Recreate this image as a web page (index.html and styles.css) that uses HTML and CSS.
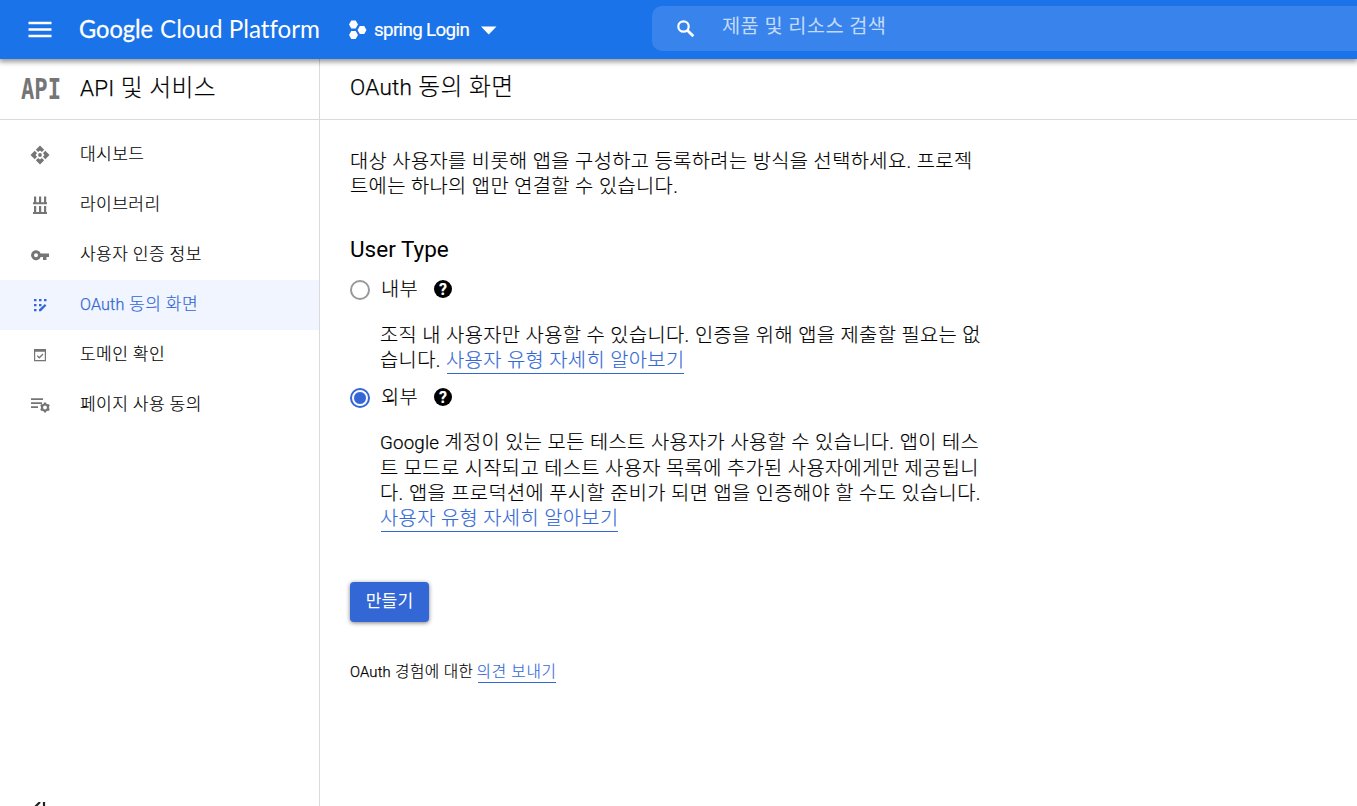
FILE: index.html
```
<!DOCTYPE html>
<html lang="ko">
<head>
<meta charset="utf-8">
<title>OAuth 동의 화면</title>
<link rel="stylesheet" href="styles.css">
</head>
<body>
<header class="topbar">
  <svg class="menu" width="24" height="18" viewBox="0 0 24 18"><path d="M0.500 2h23M0.500 8.500h23M0.500 15h23" stroke="#fff" stroke-width="2.400"/></svg>
  <svg class="brand" width="244" height="36" viewBox="0 0 244 36"><text x="0" y="26" textLength="74" lengthAdjust="spacingAndGlyphs" class="brand-strong">Google</text><text x="81" y="26" textLength="160" lengthAdjust="spacingAndGlyphs">Cloud Platform</text></svg>
  <button class="project">
    <svg width="18" height="20" viewBox="0 0 18 20" fill="#fff"><path d="M2.300.5h4.400L9 4.500 6.700 8.500H2.300L0 4.500zM2.300 11h4.400L9 15l-2.300 4H2.300L0 15zM10.800 6h4.400l2.300 4-2.300 4h-4.400L8.500 10z"/></svg>
    <span>spring Login</span>
    <svg class="caret" width="16" height="9" viewBox="0 0 16 9"><path d="M0 .5h15.500L7.750 8.500z" fill="#fff"/></svg>
  </button>
  <div class="search">
    <svg width="18" height="18" viewBox="0 0 18 18" fill="none" stroke="#fff" stroke-width="2.200"><circle cx="6.500" cy="6.500" r="5.200"/><path d="M10.300 10.300l6 6" stroke-width="2.800"/></svg>
    <span>제품 및 리소스 검색</span>
  </div>
</header>
<div class="shell">
  <aside class="side">
    <div class="side-head">
      <svg width="54" height="44" viewBox="0 0 54 44"><text x="1" y="32" textLength="40" lengthAdjust="spacingAndGlyphs" class="api">API</text></svg>
      <span><span class="en">API</span> 및 서비스</span>
    </div>
    <nav>
      <a class="item"><svg viewBox="0 0 20 20"><circle cx="10" cy="10" r="1.900"/><path d="M10 .5l4.200 4.200-2.400 2.400L10 5.500 8.200 7.100 5.800 4.700zM10 19.500l4.200-4.200-2.400-2.400-1.800 1.600-1.800-1.600-2.400 2.400zM.5 10l4.200-4.200 2.400 2.400L5.500 10l1.600 1.800-2.400 2.400zM19.500 10l-4.200-4.200-2.400 2.400 1.600 1.800-1.600 1.800 2.400 2.400z"/></svg><span>대시보드</span></a>
      <a class="item"><svg viewBox="0 0 20 20"><path d="M3 7.200h14v2H3zM4 1.500h2.200v6H4zM9 1.500h2.200v6H9zM14 1.500h2.200v6H14zM3 16.900h14v2H3zM4 11h2.200v6H4zM9 11h2.200v6H9zM14 11h2.200v6H14z"/></svg><span>라이브러리</span></a>
      <a class="item"><svg viewBox="0 0 20 20"><path fill-rule="evenodd" d="M10.700 8.400A5 5 0 1 0 10.700 12H13v3h3.500v-3H19V8.400zM6 8.200a2 2 0 1 1 0 4 2 2 0 0 1 0-4z"/></svg><span>사용자 인증 정보</span></a>
      <a class="item active"><svg viewBox="0 0 20 20"><path d="M4 4h2.500v2.200H4zM9 4h2.500v2.200H9zM14 4h2.500v2.200H14zM4 9h2.500v2.200H4zM9 9h2.500v2.200H9zM4 14h2.500v2.200H4zM9 16.300v-1.900L14.900 8.900l1.500 1.500-5.500 5.900z"/></svg><span><span class="en">OAuth</span> 동의 화면</span></a>
      <a class="item"><svg viewBox="0 0 20 20"><path fill-rule="evenodd" d="M4 4h12v12.300H4zM5.200 6.800v8.300h9.600V6.800z"/><path d="M7.300 10.800l2 2 3.700-3.800" fill="none" stroke="#757575" stroke-width="1.300"/></svg><span>도메인 확인</span></a>
      <a class="item"><svg viewBox="0 0 20 20"><path d="M1 3.200h12V5H1zM1 7.200h11V9H1zM1 11.200h7V13H1z"/><circle cx="15" cy="12.500" r="3" fill="none" stroke="#757575" stroke-width="2.200"/><path d="M15 7.500v2M15 15.500v2M10.700 10l1.700 1M17.600 14l1.700 1M10.700 15l1.700-1M17.600 11l1.700-1" stroke="#757575" stroke-width="2.200"/></svg><span>페이지 사용 동의</span></a>
    </nav>
    <svg class="collapse" width="20" height="16" viewBox="0 0 20 16" fill="none" stroke="#222" stroke-width="2.200"><path d="M8 0L0 8l8 8M12 0v16"/></svg>
  </aside>
  <main class="main">
    <h1><span class="en">OAuth</span> 동의 화면</h1>
    <div class="content">
      <p class="intro">대상 사용자를 비롯해 앱을 구성하고 등록하려는 방식을 선택하세요. 프로젝<br>트에는 하나의 앱만 연결할 수 있습니다.</p>
      <h2>User Type</h2>
      <label class="choice"><i class="radio"></i><span>내부</span><b class="help">?</b></label>
      <p class="desc">조직 내 사용자만 사용할 수 있습니다. 인증을 위해 앱을 제출할 필요는 없<br>습니다. <a>사용자 유형 자세히 알아보기</a></p>
      <label class="choice second"><i class="radio on"></i><span>외부</span><b class="help">?</b></label>
      <p class="desc"><span class="en">Google</span> 계정이 있는 모든 테스트 사용자가 사용할 수 있습니다. 앱이 테스<br>트 모드로 시작되고 테스트 사용자 목록에 추가된 사용자에게만 제공됩니<br>다. 앱을 프로덕션에 푸시할 준비가 되면 앱을 인증해야 할 수도 있습니다.<br><a>사용자 유형 자세히 알아보기</a></p>
      <button class="create">만들기</button>
      <p class="feedback"><span class="en">OAuth</span> 경험에 대한 <a>의견 보내기</a></p>
    </div>
  </main>
</div>
</body>
</html>
```
FILE: styles.css
```
* { box-sizing: border-box; }
body { margin: 0; height: 806px; overflow: hidden; display: flex; flex-direction: column; background: #fff; color: #000; font-family: Roboto, "Noto Sans CJK KR", sans-serif; font-size: 19.8px; letter-spacing: .019em; white-space: nowrap; }
p, h1, h2 { margin: 0; font-weight: 400; }
p, h1, .item, .side-head, .choice { font-weight: 300; -webkit-text-stroke: .15px currentColor; }
.en { letter-spacing: .01em; font-size: .945em; font-weight: 300; -webkit-text-stroke: .25px currentColor; }
button { border: 0; font-family: inherit; }
.topbar { position: relative; z-index: 1; flex: none; height: 59px; display: flex; align-items: center; background: #1a73e8; color: #fff; padding-left: 28px; box-shadow: 0 2px 5px 1px rgba(0,0,0,.4); }
.brand { margin-left: 27px; font: 400 24.5px Lato, sans-serif; letter-spacing: 0; font-variant-ligatures: none; fill: #fff; }
.brand-strong { stroke: #fff; stroke-width: .3px; }
.project { display: flex; align-items: center; background: none; color: #fff; padding: 0; margin-left: 26px; width: 303px; font-size: 18.75px; letter-spacing: -.65px; font-weight: 400; -webkit-text-stroke: .2px #fff; }
.project span { margin-left: 7px; }
.caret { margin-left: 12px; margin-top: 2px; }
.search { flex: 1; height: 45px; margin-bottom: 3px; background: #3884ec; border-radius: 10px 0 0 10px; display: flex; align-items: center; padding-left: 25px; color: #c3dafa; }
.search svg { margin-top: 1px; }
.search span { margin-left: 27px; padding-bottom: 7px; }
.shell { flex: 1; min-height: 0; display: flex; }
.side { width: 320px; flex: none; border-right: 1px solid #dadada; display: flex; flex-direction: column; }
.side-head { height: 61px; display: flex; align-items: center; border-bottom: 1px solid #dadada; padding-left: 20px; font-size: 23.8px; }
.side-head > span { margin-left: 6px; padding-bottom: 7px; }
.api { font: 700 28px "DejaVu Sans Mono", monospace; letter-spacing: 0; fill: #757575; }
nav { padding-top: 10px; flex: 1; }
.item { height: 50px; display: flex; align-items: center; padding-left: 30px; font-size: 17.1px; }
.item svg { width: 20px; height: 20px; fill: #757575; }
.item > span { margin-left: 30px; padding-bottom: 5px; }
.active { background: #f0f5ff; color: #3367d6; }
.active svg { fill: #3367d6; }
.collapse { flex: none; margin: 0 0 -12px 32px; }
.main { flex: 1; }
h1 { height: 61px; border-bottom: 1px solid #dadada; padding: 12px 0 0 30px; font-size: 23.8px; line-height: 32px; }
.content { padding: 29px 0 0 30px; }
p { line-height: 25px; }
h2 { font-size: 22.5px; letter-spacing: 0; line-height: 30px; margin-top: 35px; }
.choice { display: flex; align-items: center; height: 30px; margin-top: 11px; }
.choice > span { width: 41px; margin-left: 11px; padding-bottom: 5px; }
.radio { width: 20px; height: 20px; border: 2px solid #999; border-radius: 50%; display: flex; align-items: center; justify-content: center; }
.on { border-color: #3367d6; }
.on::after { content: ""; width: 12px; height: 12px; flex: none; border-radius: 50%; background: #3367d6; border: 1px solid #fff; }
.help { width: 18px; height: 18px; margin: -3px 0 0 12px; border-radius: 50%; background: #000; color: #fff; font-size: 16px; font-weight: 700; line-height: 19px; text-align: center; letter-spacing: 0; }
.desc { margin: 18px 0 0 30px; }
.second { margin-top: 10px; }
.second + .desc { margin-top: 17px; }
a { color: inherit; }
p a { color: #3367d6; display: inline-block; line-height: 25px; box-shadow: 0 2px 0 -1px #3367d6; }
.create { display: block; margin-top: 51px; width: 79px; height: 40px; border-radius: 4px; background: #3367d6; color: #fff; font-size: 17.1px; letter-spacing: .01em; padding: 0 0 5px; box-shadow: 0 1px 4px rgba(0,0,0,.5); }
.feedback { margin-top: 37px; font-size: 15.7px; }
.feedback a { margin-left: -1px; line-height: 20px; letter-spacing: .045em; }
```
